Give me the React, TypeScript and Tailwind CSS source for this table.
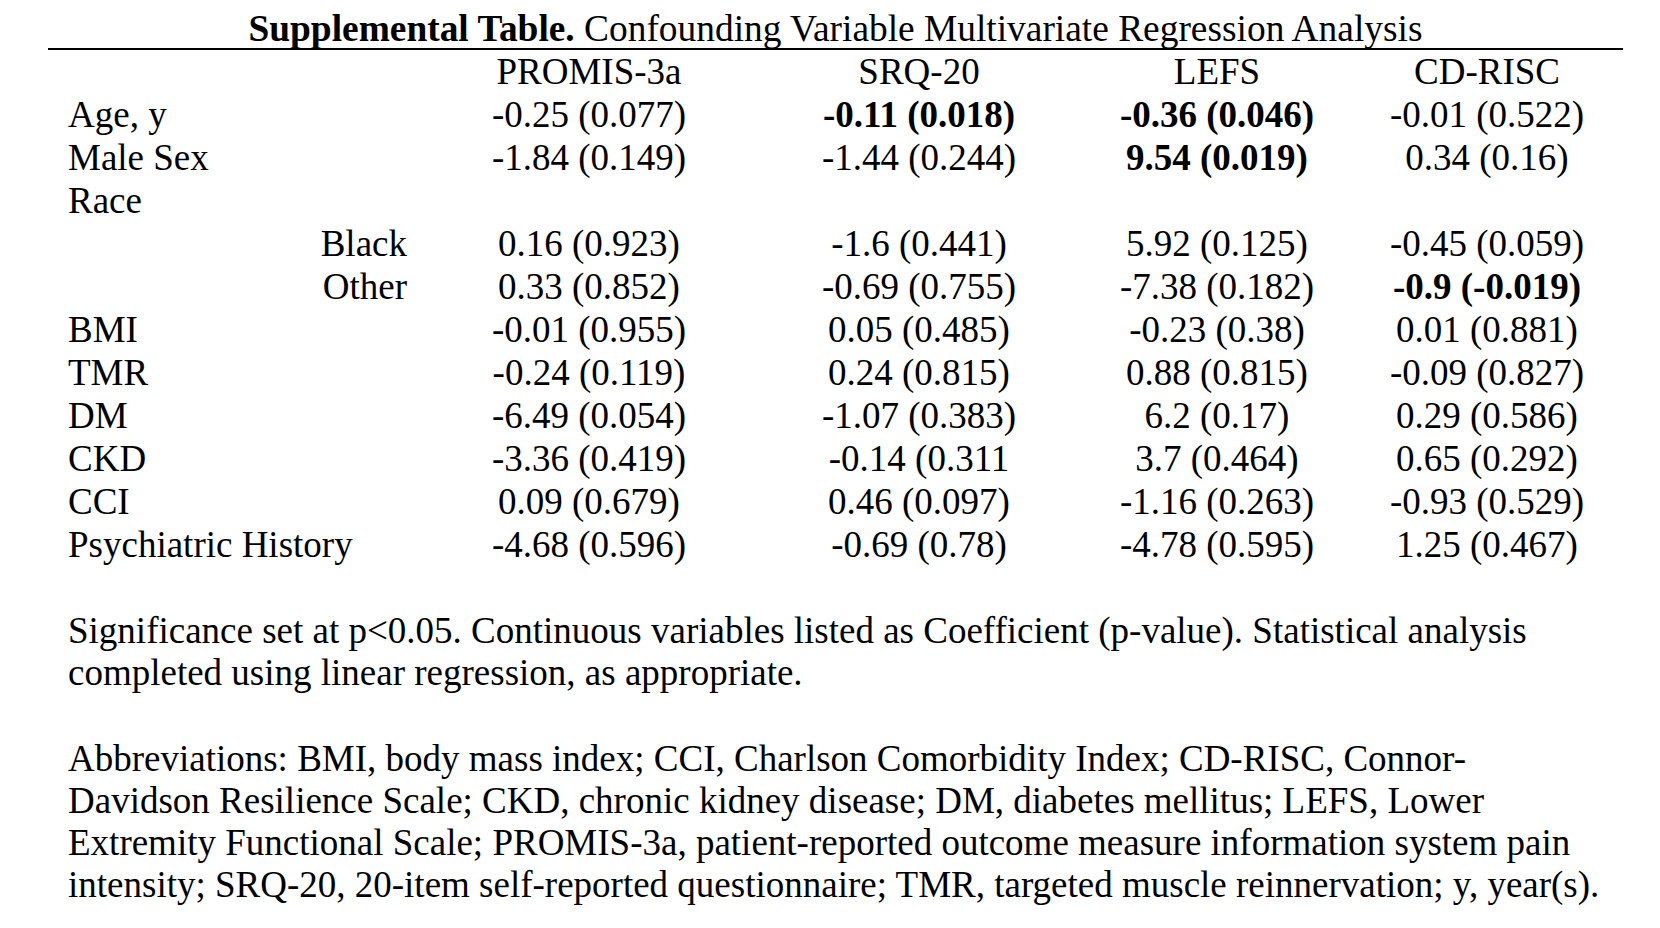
import React from 'react';

type Cell = { v: string; b?: boolean };

interface Row {
  label: string;
  sub?: boolean;
  cells: Cell[];
}

const rows: Row[] = [
  { label: 'Age, y', cells: [{ v: '-0.25 (0.077)' }, { v: '-0.11 (0.018)', b: true }, { v: '-0.36 (0.046)', b: true }, { v: '-0.01 (0.522)' }] },
  { label: 'Male Sex', cells: [{ v: '-1.84 (0.149)' }, { v: '-1.44 (0.244)' }, { v: '9.54 (0.019)', b: true }, { v: '0.34 (0.16)' }] },
  { label: 'Race', cells: [{ v: '' }, { v: '' }, { v: '' }, { v: '' }] },
  { label: 'Black', sub: true, cells: [{ v: '0.16 (0.923)' }, { v: '-1.6 (0.441)' }, { v: '5.92 (0.125)' }, { v: '-0.45 (0.059)' }] },
  { label: 'Other', sub: true, cells: [{ v: '0.33 (0.852)' }, { v: '-0.69 (0.755)' }, { v: '-7.38 (0.182)' }, { v: '-0.9 (-0.019)', b: true }] },
  { label: 'BMI', cells: [{ v: '-0.01 (0.955)' }, { v: '0.05 (0.485)' }, { v: '-0.23 (0.38)' }, { v: '0.01 (0.881)' }] },
  { label: 'TMR', cells: [{ v: '-0.24 (0.119)' }, { v: '0.24 (0.815)' }, { v: '0.88 (0.815)' }, { v: '-0.09 (0.827)' }] },
  { label: 'DM', cells: [{ v: '-6.49 (0.054)' }, { v: '-1.07 (0.383)' }, { v: '6.2 (0.17)' }, { v: '0.29 (0.586)' }] },
  { label: 'CKD', cells: [{ v: '-3.36 (0.419)' }, { v: '-0.14 (0.311' }, { v: '3.7 (0.464)' }, { v: '0.65 (0.292)' }] },
  { label: 'CCI', cells: [{ v: '0.09 (0.679)' }, { v: '0.46 (0.097)' }, { v: '-1.16 (0.263)' }, { v: '-0.93 (0.529)' }] },
  { label: 'Psychiatric History', cells: [{ v: '-4.68 (0.596)' }, { v: '-0.69 (0.78)' }, { v: '-4.78 (0.595)' }, { v: '1.25 (0.467)' }] },
];

const headers = ['PROMIS-3a', 'SRQ-20', 'LEFS', 'CD-RISC'];

const gridCols = 'grid grid-cols-[356px_330px_330px_266px_274px]';

export default function App() {
  return (
    <div className="min-h-screen w-full bg-white text-black font-['Liberation_Serif','Times_New_Roman',serif] text-[37px] leading-[43px] pt-[9px]">
      {/* title + rule */}
      <div className="ml-[48px] w-[1575px] border-b-2 border-black text-center text-[37.4px] leading-[39px] whitespace-nowrap">
        <span className="font-bold">Supplemental Table.</span> Confounding Variable Multivariate Regression Analysis
      </div>

      <div className="pl-[68px]">
        <div className={gridCols}>
          <div />
          {headers.map((h) => (
            <div key={h} className="text-center whitespace-nowrap">{h}</div>
          ))}
        </div>
        {rows.map((r) => (
          <div key={r.label} className={gridCols}>
            <div className={r.sub ? 'text-right pr-[17px] whitespace-nowrap' : 'whitespace-nowrap'}>{r.label}</div>
            {r.cells.map((c, i) => (
              <div key={i} className={c.b ? 'text-center font-bold whitespace-nowrap' : 'text-center whitespace-nowrap'}>
                {c.v || '\u00a0'}
              </div>
            ))}
          </div>
        ))}

        {/* notes */}
        <div className="mt-[44px] leading-[42px] whitespace-nowrap">
          <div>Significance set at p&lt;0.05. Continuous variables listed as Coefficient (p-value). Statistical analysis</div>
          <div>completed using linear regression, as appropriate.</div>
        </div>
        <div className="mt-[44px] leading-[42px] whitespace-nowrap">
          <div>Abbreviations: BMI, body mass index; CCI, Charlson Comorbidity Index; CD-RISC, Connor-</div>
          <div>Davidson Resilience Scale; CKD, chronic kidney disease; DM, diabetes mellitus; LEFS, Lower</div>
          <div>Extremity Functional Scale; PROMIS-3a, patient-reported outcome measure information system pain</div>
          <div>intensity; SRQ-20, 20-item self-reported questionnaire; TMR, targeted muscle reinnervation; y, year(s).</div>
        </div>
      </div>
    </div>
  );
}
